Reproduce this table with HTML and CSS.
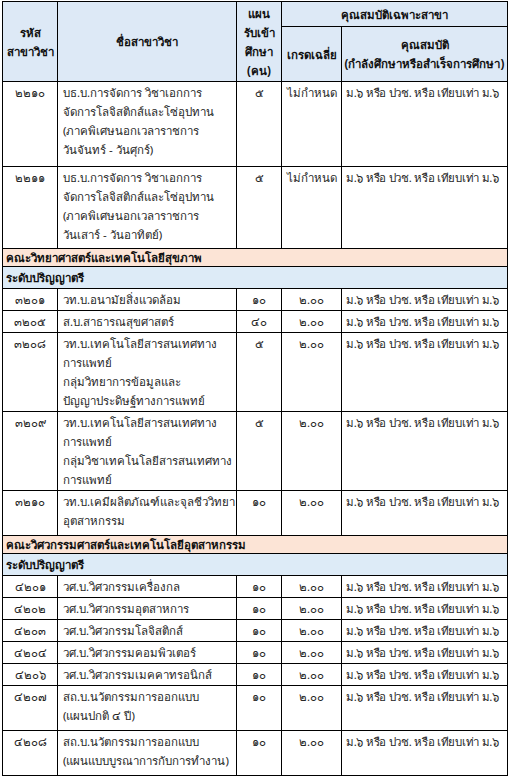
FILE: index.html
```html
<!DOCTYPE html>
<html lang="th">
<head>
<meta charset="utf-8">
<link rel="stylesheet" href="styles.css">
</head>
<body>
<table class="tbl">
  <colgroup>
    <col class="c-code"><col class="c-name"><col class="c-plan"><col class="c-gpa"><col class="c-qual">
  </colgroup>
  <thead>
    <tr class="h1">
      <th rowspan="2">รหัส<br>สาขาวิชา</th>
      <th rowspan="2">ชื่อสาขาวิชา</th>
      <th rowspan="2" class="plan-h">แผน<br>รับเข้า<br>ศึกษา<br>(คน)</th>
      <th colspan="2">คุณสมบัติเฉพาะสาขา</th>
    </tr>
    <tr class="h2">
      <th>เกรดเฉลี่ย</th>
      <th>คุณสมบัติ<br>(กำลังศึกษาหรือสำเร็จการศึกษา)</th>
    </tr>
  </thead>
  <tbody>
    <tr class="r4a">
      <td class="code">๒๒๑๐</td>
      <td class="name">บธ.บ.การจัดการ วิชาเอกการ<br>จัดการโลจิสติกส์และโซ่อุปทาน<br>(ภาคพิเศษนอกเวลาราชการ<br>วันจันทร์ - วันศุกร์)</td>
      <td class="num">๕</td>
      <td class="gpa">ไม่กำหนด</td>
      <td class="qual">ม.๖ หรือ ปวช. หรือ เทียบเท่า ม.๖</td>
    </tr>
    <tr class="r4b">
      <td class="code">๒๒๑๑</td>
      <td class="name">บธ.บ.การจัดการ วิชาเอกการ<br>จัดการโลจิสติกส์และโซ่อุปทาน<br>(ภาคพิเศษนอกเวลาราชการ<br>วันเสาร์ - วันอาทิตย์)</td>
      <td class="num">๕</td>
      <td class="gpa">ไม่กำหนด</td>
      <td class="qual">ม.๖ หรือ ปวช. หรือ เทียบเท่า ม.๖</td>
    </tr>
    <tr class="faculty"><td colspan="5">คณะวิทยาศาสตร์และเทคโนโลยีสุขภาพ</td></tr>
    <tr class="level"><td colspan="5">ระดับปริญญาตรี</td></tr>
    <tr>
      <td class="code">๓๒๐๑</td>
      <td class="name">วท.บ.อนามัยสิ่งแวดล้อม</td>
      <td class="num">๑๐</td>
      <td class="gpa">๒.๐๐</td>
      <td class="qual">ม.๖ หรือ ปวช. หรือ เทียบเท่า ม.๖</td>
    </tr>
    <tr>
      <td class="code">๓๒๐๕</td>
      <td class="name">ส.บ.สาธารณสุขศาสตร์</td>
      <td class="num">๔๐</td>
      <td class="gpa">๒.๐๐</td>
      <td class="qual">ม.๖ หรือ ปวช. หรือ เทียบเท่า ม.๖</td>
    </tr>
    <tr>
      <td class="code">๓๒๐๘</td>
      <td class="name">วท.บ.เทคโนโลยีสารสนเทศทาง<br>การแพทย์<br>กลุ่มวิทยาการข้อมูลและ<br>ปัญญาประดิษฐ์ทางการแพทย์</td>
      <td class="num">๕</td>
      <td class="gpa">๒.๐๐</td>
      <td class="qual">ม.๖ หรือ ปวช. หรือ เทียบเท่า ม.๖</td>
    </tr>
    <tr>
      <td class="code">๓๒๐๙</td>
      <td class="name">วท.บ.เทคโนโลยีสารสนเทศทาง<br>การแพทย์<br>กลุ่มวิชาเทคโนโลยีสารสนเทศทาง<br>การแพทย์</td>
      <td class="num">๕</td>
      <td class="gpa">๒.๐๐</td>
      <td class="qual">ม.๖ หรือ ปวช. หรือ เทียบเท่า ม.๖</td>
    </tr>
    <tr class="r2">
      <td class="code">๓๒๑๐</td>
      <td class="name">วท.บ.เคมีผลิตภัณฑ์และจุลชีววิทยา<br>อุตสาหกรรม</td>
      <td class="num">๑๐</td>
      <td class="gpa">๒.๐๐</td>
      <td class="qual">ม.๖ หรือ ปวช. หรือ เทียบเท่า ม.๖</td>
    </tr>
    <tr class="faculty"><td colspan="5">คณะวิศวกรรมศาสตร์และเทคโนโลยีอุตสาหกรรม</td></tr>
    <tr class="level"><td colspan="5">ระดับปริญญาตรี</td></tr>
    <tr>
      <td class="code">๔๒๐๑</td>
      <td class="name">วศ.บ.วิศวกรรมเครื่องกล</td>
      <td class="num">๑๐</td>
      <td class="gpa">๒.๐๐</td>
      <td class="qual">ม.๖ หรือ ปวช. หรือ เทียบเท่า ม.๖</td>
    </tr>
    <tr>
      <td class="code">๔๒๐๒</td>
      <td class="name">วศ.บ.วิศวกรรมอุตสาหการ</td>
      <td class="num">๑๐</td>
      <td class="gpa">๒.๐๐</td>
      <td class="qual">ม.๖ หรือ ปวช. หรือ เทียบเท่า ม.๖</td>
    </tr>
    <tr>
      <td class="code">๔๒๐๓</td>
      <td class="name">วศ.บ.วิศวกรรมโลจิสติกส์</td>
      <td class="num">๑๐</td>
      <td class="gpa">๒.๐๐</td>
      <td class="qual">ม.๖ หรือ ปวช. หรือ เทียบเท่า ม.๖</td>
    </tr>
    <tr>
      <td class="code">๔๒๐๔</td>
      <td class="name">วศ.บ.วิศวกรรมคอมพิวเตอร์</td>
      <td class="num">๑๐</td>
      <td class="gpa">๒.๐๐</td>
      <td class="qual">ม.๖ หรือ ปวช. หรือ เทียบเท่า ม.๖</td>
    </tr>
    <tr>
      <td class="code">๔๒๐๖</td>
      <td class="name">วศ.บ.วิศวกรรมเมคคาทรอนิกส์</td>
      <td class="num">๑๐</td>
      <td class="gpa">๒.๐๐</td>
      <td class="qual">ม.๖ หรือ ปวช. หรือ เทียบเท่า ม.๖</td>
    </tr>
    <tr class="r2">
      <td class="code">๔๒๐๗</td>
      <td class="name">สถ.บ.นวัตกรรมการออกแบบ<br>(แผนปกติ ๔ ปี)</td>
      <td class="num">๑๐</td>
      <td class="gpa">๒.๐๐</td>
      <td class="qual">ม.๖ หรือ ปวช. หรือ เทียบเท่า ม.๖</td>
    </tr>
    <tr class="r2">
      <td class="code">๔๒๐๘</td>
      <td class="name">สถ.บ.นวัตกรรมการออกแบบ<br>(แผนแบบบูรณาการกับการทำงาน)</td>
      <td class="num">๑๐</td>
      <td class="gpa">๒.๐๐</td>
      <td class="qual">ม.๖ หรือ ปวช. หรือ เทียบเท่า ม.๖</td>
    </tr>
  </tbody>
</table>
</body>
</html>
```

FILE: styles.css
```css
html, body {
  margin: 0;
  padding: 0;
  background: #ffffff;
}

body {
  padding: 1px 0 0 2px;
  font-family: Tahoma, "Noto Sans", "DejaVu Sans", sans-serif;
  font-size: 11.5px;
  color: #262626;
}

.tbl {
  border-collapse: collapse;
  width: 505px;
  table-layout: fixed;
}

.c-code { width: 55px; }
.c-name { width: 179px; }
.c-plan { width: 45px; }
.c-gpa  { width: 60px; }
.c-qual { width: 166px; }

.tbl th,
.tbl td {
  border: 1px solid #000000;
  padding: 1px 5px;
  line-height: 19px;
  vertical-align: top;
  white-space: nowrap;
}

.tbl th {
  background: #dde9f6;
  color: #111111;
  font-weight: bold;
  text-align: center;
  vertical-align: middle;
  padding: 0 1px;
}

.h1 th { height: 24px; }
.h2 th { height: 54px; }
.plan-h { line-height: 18px; }

.code { text-align: center; }
.num  { text-align: center; }
.gpa  { text-align: center; }
.tbl td.gpa { padding-left: 1px; padding-right: 1px; }
.tbl td.qual {
  padding-left: 4px;
  padding-right: 1px;
  letter-spacing: -0.3px;
}

.r4a td { padding-bottom: 7px; }
.r4b td { padding-bottom: 4px; }
.r2 td { padding-bottom: 5px; }

.faculty td {
  background: #fce4d6;
  font-weight: bold;
  color: #111111;
}

.tbl .faculty td { padding: 0 3px; line-height: 17px; }

.level td {
  background: #ddebf7;
  font-weight: bold;
  color: #111111;
}

.tbl .level td { padding: 1px 3px; }
```
